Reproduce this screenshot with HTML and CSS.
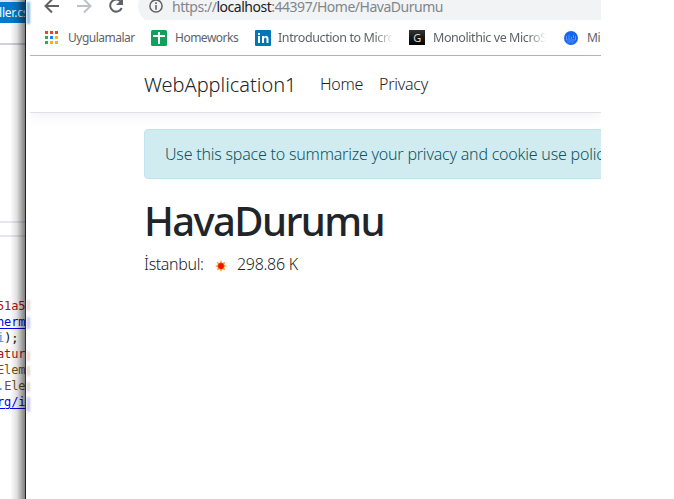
FILE: index.html
```html
<!DOCTYPE html>
<html lang="tr">
<head>
<meta charset="utf-8">
<title>HavaDurumu</title>
<link rel="stylesheet" href="styles.css">
</head>
<body>
<div class="desktop">
  <aside class="editor">
    <div class="tab"><span>ller.cs</span></div>
    <div class="editor-bar"></div>
    <div class="editor-split"></div>
    <pre class="code"><span class="str">51a5</span>
<span class="link">herm</span>
<span class="var">i</span>);
<span class="str">atur</span>
<span class="fn">Elem</span>
<span class="var">.</span><span class="fn">Ele</span><span class="fn">m</span>
<span class="link">rg/i</span></pre>
  </aside>
  <div class="frame"><i class="glow blue"></i><i class="glow code-glow"></i></div>
  <main class="browser">
    <div class="toolbar">
      <svg class="nav-icons" width="100" height="20" fill="none" stroke-width="2">
        <path d="M29 6H16M22 -.5L15.500 6L22 12.500" stroke="#5f6368"/>
        <path d="M47 6H60M54 -.5L60.500 6L54 12.500" stroke="#bfc1c3"/>
        <path d="M91 2A6 6 0 1 0 91.700 8" stroke="#5f6368"/>
        <path d="M93 -2V5H86Z" fill="#5f6368"/>
      </svg>
      <div class="address">
        <svg width="14" height="14" viewBox="0 0 14 14"><circle cx="7" cy="7" r="6.100" fill="none" stroke="#5f6368" stroke-width="1.500"/><path d="M6.200 3.300h1.600v1.600H6.200zM6.200 6h1.600v4.700H6.200z" fill="#5f6368"/></svg>
        <span class="url">https://<b>localhost</b>:44397/Home/HavaDurumu</span>
      </div>
    </div>
    <nav class="bookmarks">
      <a class="bm apps"><svg width="13" height="13"><path d="M0 0h3v3H0zM5 0h3v3H5zM10 0h3v3h-3z" fill="#ea4335"/><path d="M0 5h3v3H0zM0 10h3v3H0z" fill="#34a853"/><path d="M5 5h3v3H5z" fill="#1a83f5"/><path d="M10 5h3v3h-3zM5 10h3v3H5zM10 10h3v3h-3z" fill="#fbb304"/></svg><span>Uygulamalar</span></a>
      <a class="bm homeworks"><svg width="16" height="16"><rect width="16" height="16" rx="1.500" fill="#12a05c"/><path d="M7 2h2v12H7zM2 5h12v2H2z" fill="#fff"/></svg><span>Homeworks</span></a>
      <a class="bm linkedin"><svg width="16" height="16"><rect width="16" height="16" rx="1" fill="#0077b5"/><path d="M3 6h2v7H3zM3 3h2v2H3zM7 6h2v1q1-1.300 2.500-1.100Q13.500 6 13.500 9v4h-2V9q0-1.500-1.200-1.500T9 9v4H7z" fill="#fff"/></svg><span>Introduction to Micro</span></a>
      <a class="bm mono"><i class="g-icon">G</i><span>Monolithic ve MicroS</span></a>
      <a class="bm docker"><svg width="14" height="14"><circle cx="7" cy="7" r="7" fill="#1766ee"/><path d="M2.500 5v4h9V5M5 4v4M7.500 6v2M9.500 4v3M3 11h7" fill="none" stroke="#77a8ff" stroke-width=".7"/></svg><span>Mi</span></a>
    </nav>
    <header class="navbar"><a class="brand">WebApplication1</a><a class="home">Home</a><a class="privacy">Privacy</a></header>
    <section class="content">
      <div class="alert"><span>Use this space to summarize your privacy and cookie use policy.</span></div>
      <h1>HavaDurumu</h1>
      <div class="weather"><span class="city">İstanbul:</span>
        <svg width="12" height="12" viewBox="0 0 12 12"><path d="M6 0L7.300 2.900 10.200 1.800 9.200 4.700 12 6 9.200 7.300 10.200 10.200 7.300 9.200 6 12 4.700 9.200 1.800 10.200 2.800 7.300 0 6 2.800 4.700 1.800 1.800 4.700 2.900Z" fill="#ff9c28"/><circle cx="6" cy="6" r="2.900" fill="#f80d00"/></svg>
        <span class="temp">298.86 K</span></div>
    </section>
  </main>
</div>
</body>
</html>
```
FILE: styles.css
```css
* { box-sizing: border-box; }
body { margin: 0; background: #fff; font-family: "Noto Sans", sans-serif; }
.desktop { display: flex; width: 674px; height: 499px; overflow: hidden; }
.editor { width: 25px; flex: none; overflow: hidden; position: relative; background: #fff; }
.editor::after { content: ""; position: absolute; top: 0; bottom: 0; right: 0; width: 15px; background: linear-gradient(90deg, transparent, rgba(0,0,0,.12) 45%, rgba(0,0,0,.5)); }
.tab { height: 23px; border-top: 2px solid #dce1ef; background: #007acc; color: #fff; font-size: 12px; letter-spacing: -.2px; line-height: 21px; white-space: nowrap; }
.tab span { margin-left: -1px; }
.editor-bar { height: 22px; border-bottom: 2px solid #ccd0e2; }
.editor-split { margin-top: 176px; height: 16px; border: solid #e6e7ee; border-width: 2px 0; }
.code { margin: 61px 0 0 -3px; font: 12px/16px "DejaVu Sans Mono", monospace; letter-spacing: -.1px; color: #111; }
.str { color: #a31515; }
.link { color: #0000ee; text-decoration: underline; text-underline-offset: 2px; }
.var { color: #379bd3; }
.fn { color: #74531f; }
.frame { width: 5px; flex: none; border-left: 1px solid #222; background: #fff; position: relative; }
.glow { position: absolute; left: 1px; width: 3px; filter: blur(1px); }
.blue { top: 2px; height: 22px; background: #82b6d9; }
.code-glow { top: 300px; height: 112px; background: linear-gradient(#e8d5d5 0 10px, #fff 12px 16px, #c4c4f5 18px 28px, #fff 30px 50px, #e8d5d5 52px 60px, #fff 62px 65px, #ddd8cc 67px 75px, #fff 77px 81px, #ddd8cc 83px 91px, #fff 93px 96px, #c4c4f5 98px 112px); }
.browser { width: 571px; flex: none; overflow: hidden; color: #212529; }
.toolbar { height: 20px; display: flex; overflow: hidden; background: #fff; }
.nav-icons { flex: none; width: 108px; }
.address { width: 500px; flex: none; height: 34px; margin-top: -11px; padding: 0 0 0 11px; border-radius: 17px; background: #f1f3f4; display: flex; align-items: center; }
.address svg { flex: none; margin-right: 9px; }
.url { font-size: 14px; letter-spacing: -.48px; color: #80868b; white-space: nowrap; }
.url b { color: #202124; font-weight: 400; }
.bookmarks { height: 36px; border-bottom: 1px solid #b5b6b8; display: flex; align-items: center; padding-left: 15px; color: #5f6368; font-size: 12px; letter-spacing: -.5px; white-space: nowrap; }
.bm { display: flex; align-items: center; flex: none; }
.bm svg { flex: none; }
.apps { width: 106px; gap: 10px; }
.homeworks { width: 104px; gap: 8px; }
.linkedin { width: 154px; gap: 7px; font-size: 12.500px; letter-spacing: -.4px; }
.mono { width: 155px; gap: 8px; font-size: 12.500px; letter-spacing: -.42px; }
.docker { gap: 9px; }
.linkedin span { width: 115px; overflow: hidden; mask-image: linear-gradient(90deg, #000 84%, transparent); }
.mono span { width: 113px; overflow: hidden; mask-image: linear-gradient(90deg, #000 84%, transparent); }
.g-icon { width: 16px; height: 15px; background: linear-gradient(#333, #000); color: #ddd; font: 11px/15px "Noto Sans", sans-serif; text-align: center; }
.navbar { height: 57px; padding-left: 114px; display: flex; align-items: center; border-bottom: 1px solid #dee2e6; box-shadow: 0 4px 12px rgba(0,0,0,.05); font-size: 16px; }
.brand { width: 176px; font-size: 20px; font-weight: 350; letter-spacing: -.03px; }
.home { width: 59px; letter-spacing: -.25px; font-weight: 350; }
.privacy { letter-spacing: -.25px; font-weight: 350; }
.content { padding: 16px 0 0 114px; }
.alert { width: 900px; height: 50px; border: 1px solid #bee5eb; border-radius: 4px; background: #d1ecf1; color: #0c5460; padding: 0 20px; line-height: 49px; font-size: 16px; letter-spacing: -.21px; font-weight: 350; }
h1 { margin: 18px 0 8px; font-size: 40px; font-weight: 500; line-height: 48px; letter-spacing: -1.600px; }
.weather { display: flex; align-items: center; height: 24px; font-size: 16px; margin-top: -1px; font-weight: 350; letter-spacing: -.3px; }
.city { width: 71px; letter-spacing: -.35px; }
.weather svg { margin-top: 3px; margin-right: 10px; }
```
